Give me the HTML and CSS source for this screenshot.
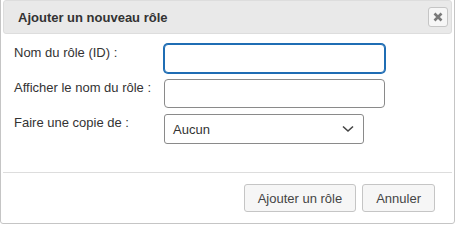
FILE: index.html
```html
<!DOCTYPE html>
<html>
<head>
    <meta name="viewport" content="width=device-width, initial-scale=1">
    <title>Ajouter un nouveau rôle</title>
    <link rel="stylesheet" href="styles.css">
</head>
<body>
    <div class="dialog">
        <div class="titlebar">
            <span class="title">Ajouter un nouveau rôle</span>
            <button class="close" title="Fermer">
                <svg width="10" height="10" viewBox="0 0 10 10">
                    <path d="M1.5 1.5 L8.5 8.5 M8.5 1.5 L1.5 8.5" stroke="#7a7a7a" stroke-width="2.6" stroke-linecap="butt"/>
                </svg>
            </button>
        </div>

        <div class="content">
            <label for="roleId">Nom du rôle (ID) :</label>
            <input type="text" id="roleId" class="field focused">

            <label for="roleName">Afficher le nom du rôle :</label>
            <input type="text" id="roleName" class="field">

            <label for="copyFrom">Faire une copie de :</label>
            <div class="select">
                <span>Aucun</span>
                <svg width="12" height="8" viewBox="0 0 12 8">
                    <path d="M1 1.5 L6 6 L11 1.5" fill="none" stroke="#444" stroke-width="1.6"/>
                </svg>
            </div>
        </div>

        <div class="buttonpane">
            <button class="btn">Ajouter un rôle</button>
            <button class="btn">Annuler</button>
        </div>
    </div>
</body>
</html>
```

FILE: styles.css
```css
body {
    margin: 0;
    font-family: "Liberation Sans", Arial, sans-serif;
    font-size: 13px;
    color: #333;
    background-color: #fff;
}
.dialog {
    box-sizing: border-box;
    width: 455px;
    height: 227px;
    margin-top: -3px;
    padding: 2px;
    border: 1px solid #c5c5c5;
    border-radius: 3px;
    background-color: #fff;
    display: flex;
    flex-direction: column;
}
.titlebar {
    box-sizing: border-box;
    height: 34px;
    display: flex;
    align-items: center;
    justify-content: space-between;
    padding: 0 3px 0 14px;
    background-color: #e9e9e9;
    border: 1px solid #dddddd;
    border-radius: 3px;
}
.title {
    font-weight: bold;
    color: #333;
    padding-top: 1px;
}
.close {
    box-sizing: border-box;
    width: 20px;
    height: 20px;
    padding: 0;
    border: 1px solid #c5c5c5;
    border-radius: 3px;
    background-color: #f6f6f6;
    display: flex;
    align-items: center;
    justify-content: center;
}
.content {
    flex: 1;
    display: grid;
    grid-template-columns: 150px auto;
    grid-auto-rows: 35px;
    align-items: start;
    justify-items: start;
    padding: 10px 0 0 11px;
}
label {
    line-height: 15px;
    padding-top: 1px;
}
.field {
    box-sizing: border-box;
    width: 221px;
    height: 29px;
    margin: 0;
    border: 1px solid #8a8a8a;
    border-radius: 4px;
    font: inherit;
}
.field.focused {
    border-color: #1f6db4;
    box-shadow: 0 0 0 1px #1f6db4;
}
.select {
    box-sizing: border-box;
    width: 200px;
    height: 30px;
    display: flex;
    align-items: center;
    justify-content: space-between;
    padding: 0 9px 0 8px;
    border: 1px solid #8a8a8a;
    border-radius: 3px;
    color: #333;
}
.buttonpane {
    box-sizing: border-box;
    height: 49px;
    display: flex;
    justify-content: flex-end;
    align-items: flex-start;
    gap: 6px;
    padding: 11px 17px 0 0;
    border-top: 1px solid #dddddd;
}
.btn {
    box-sizing: border-box;
    height: 28px;
    padding: 0 13px;
    border: 1px solid #c5c5c5;
    border-radius: 3px;
    background-color: #f6f6f6;
    color: #454545;
    font-family: inherit;
    font-size: 13px;
}
```
